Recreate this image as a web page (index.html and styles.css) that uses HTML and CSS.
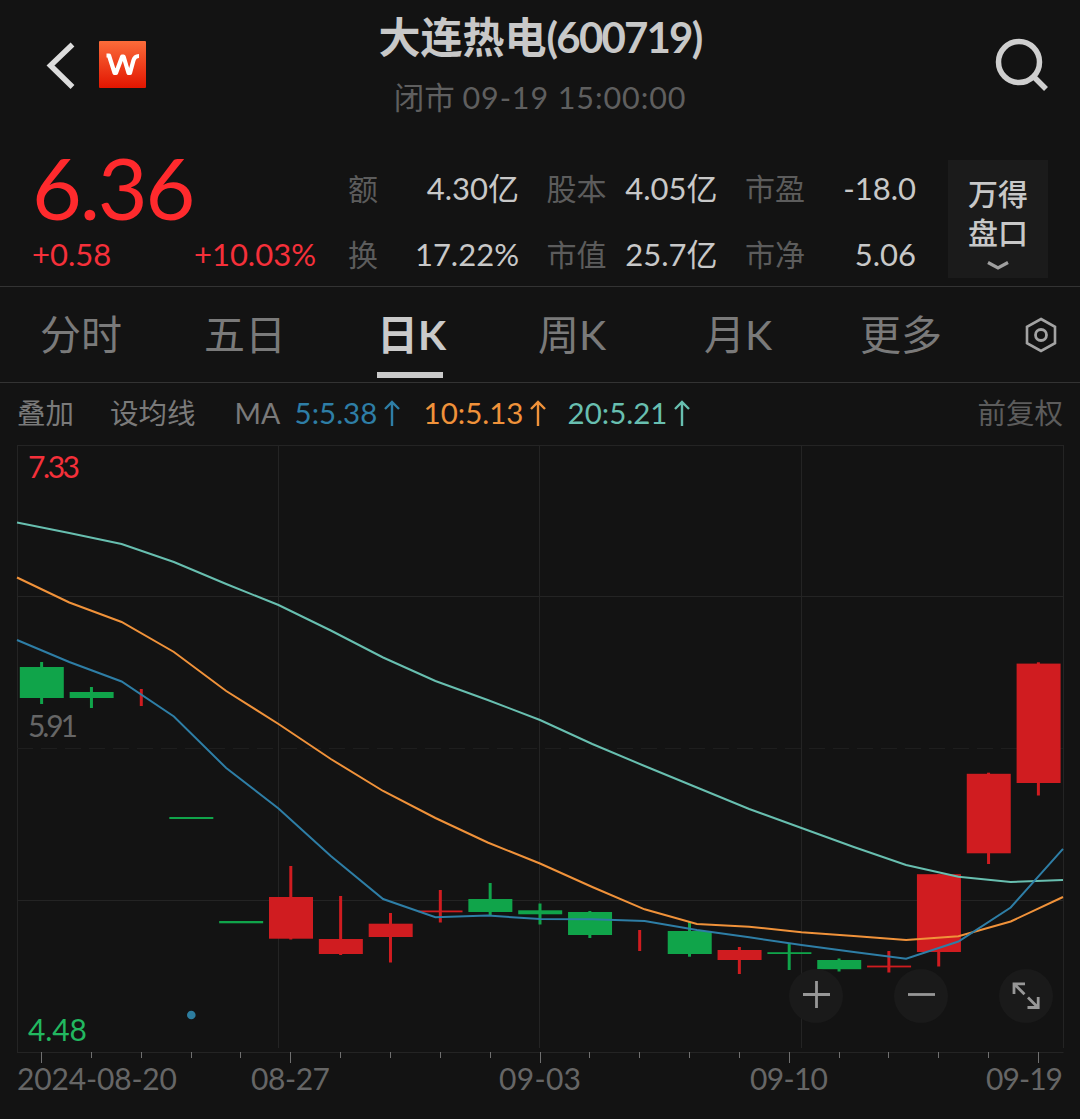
FILE: index.html
```html
<!DOCTYPE html>
<html lang="zh-CN">

<head>
    <meta charset="UTF-8">
    <meta name="viewport" content="width=device-width, initial-scale=1.0">
    <title>大连热电(600719)</title>
    <link rel="stylesheet" href="styles.css">
</head>

<body>
    <header class="header">
        <div class="header-left">
            <svg class="back" width="30" height="48" viewBox="0 0 30 48">
                <path d="M27.5 3.5L5.5 24.5L27.5 46" fill="none" stroke="#dcdcdc" stroke-width="5.5" />
            </svg>
            <svg class="logo" width="47" height="47" viewBox="0 0 47 47">
                <defs>
                    <linearGradient id="logo-bg" x1="0" y1="0" x2="0" y2="1">
                        <stop offset="0" stop-color="#fb6c3a" />
                        <stop offset="1" stop-color="#e21500" />
                    </linearGradient>
                </defs>
                <rect width="47" height="47" rx="1" fill="url(#logo-bg)" />
                <path d="M7.5 14.5H10L15.6 32H17L23.2 15.5H24.6L29.5 32H31L34.4 19.5Q35.6 15 40 15" fill="none" stroke="#fff" stroke-width="4.2" stroke-linejoin="round" />
            </svg>
        </div>
        <div class="header-title">
            <h1>大连热电<span class="code">(600719)</span></h1>
            <p class="status">闭市 <span>09-19 15:00:00</span></p>
        </div>
        <svg class="search" width="56" height="56" viewBox="0 0 56 56">
            <circle cx="27" cy="26" r="20.5" fill="none" stroke="#cfcfcf" stroke-width="5.5" />
            <path d="M41.5 40.5L54 53" stroke="#cfcfcf" stroke-width="5.5" />
        </svg>
    </header>

    <section class="quote">
        <div class="price-box">
            <div class="price">6.36</div>
            <div class="change">
                <span>+0.58</span>
                <span>+10.03%</span>
            </div>
        </div>
        <dl class="stats">
            <div><dt>额</dt><dd>4.30亿</dd></div>
            <div><dt>股本</dt><dd>4.05亿</dd></div>
            <div><dt>市盈</dt><dd>-18.0</dd></div>
            <div><dt>换</dt><dd>17.22%</dd></div>
            <div><dt>市值</dt><dd>25.7亿</dd></div>
            <div><dt>市净</dt><dd>5.06</dd></div>
        </dl>
        <button class="depth">
            <span>万得</span>
            <span>盘口</span>
            <svg width="24" height="10" viewBox="0 0 24 10">
                <path d="M2 1.5L12 7L22 1.5" fill="none" stroke="#a0a0a0" stroke-width="3.2" />
            </svg>
        </button>
    </section>

    <nav class="tabs">
        <a>分时</a>
        <a>五日</a>
        <a class="active">日K</a>
        <a>周K</a>
        <a class="month">月K</a>
        <a>更多</a>
        <svg class="settings" width="34" height="38" viewBox="0 0 34 38">
            <path d="M17 3L31 10.8V27.2L17 35L3 27.2V10.8Z" fill="none" stroke="#a3a3a3" stroke-width="2.6" />
            <circle cx="17" cy="19" r="5.5" fill="none" stroke="#a3a3a3" stroke-width="2.8" />
        </svg>
    </nav>

    <div class="indicators">
        <span class="overlay">叠加</span>
        <span class="set-ma">设均线</span>
        <span class="ma">MA</span>
        <span class="ma-value ma5">5:5.38<svg class="arrow" viewBox="0 0 16 26"><path d="M8 26V2M1 9L8 2L15 9" /></svg></span>
        <span class="ma-value ma10">10:5.13<svg class="arrow" viewBox="0 0 16 26"><path d="M8 26V2M1 9L8 2L15 9" /></svg></span>
        <span class="ma-value ma20">20:5.21<svg class="arrow" viewBox="0 0 16 26"><path d="M8 26V2M1 9L8 2L15 9" /></svg></span>
        <span class="adjust">前复权</span>
    </div>

    <div class="chart">
        <svg id="kline" width="1080" height="677" viewBox="0 442 1080 677">
            <g id="grid" class="grid">
                <path d="M17 445.5H1063.5M17 596.5H1063.5M17 900.5H1063.5M17 1052.5H1063.5" />
                <path d="M17.5 445V1052M278.5 445V1048M539.5 445V1048M801.5 445V1048M1063.5 445V1048" />
                <path class="dashed" d="M17 748.5H1063" />
            </g>
            <g id="ticks" class="ticks"></g>
            <g id="candles"></g>
            <g id="lines" class="lines"></g>
            <circle cx="191.3" cy="1015" r="4.3" fill="#2d7d9f" />
            <g class="labels">
                <text class="high" x="28" y="478" textLength="52">7.33</text>
                <text x="28" y="737" textLength="50">5.91</text>
                <text class="low" x="28" y="1041" textLength="59">4.48</text>
                <text x="17" y="1090" textLength="160">2024-08-20</text>
                <text x="251" y="1090" textLength="79">08-27</text>
                <text x="499" y="1090" textLength="82">09-03</text>
                <text x="750" y="1090" textLength="78">09-10</text>
                <text x="986" y="1090" textLength="77">09-19</text>
            </g>
        </svg>
        <div class="chart-buttons">
            <button aria-label="放大">
                <svg width="54" height="54" viewBox="0 0 54 54"><path d="M14 25.5H41M27.5 12V39" /></svg>
            </button>
            <button aria-label="缩小">
                <svg width="54" height="54" viewBox="0 0 54 54"><path d="M14 25.5H41" /></svg>
            </button>
            <button aria-label="全屏">
                <svg width="54" height="54" viewBox="0 0 54 54"><path d="M15 25V14.8H26M15 14.8L25.5 25.2M29 28.5L39 38.5M28.5 38.5H39.2V28" /></svg>
            </button>
        </div>
    </div>

    <script>
        const SVG = "http://www.w3.org/2000/svg";

        // [direction, high, open/close top, open/close bottom, low]
        const candles = [
            ["down", 662, 667, 698, 704],
            ["down", 687, 692, 698, 708],
            ["up", 689, 0, 0, 706],
            ["down", 817, 817, 819, 819],
            ["down", 921, 921, 923.3, 923.3],
            ["up", 866, 897, 938.7, 939.5],
            ["up", 896, 939, 954, 955],
            ["up", 913, 923.7, 937, 962.5],
            ["up", 890, 910.5, 912.3, 922.5],
            ["down", 883, 899, 912, 916],
            ["down", 903.5, 910.3, 914.3, 924.5],
            ["down", 911, 912, 935, 938],
            ["up", 930, 0, 0, 951],
            ["down", 922, 931, 954, 956.7],
            ["up", 947, 950, 960, 974],
            ["down", 944, 952.2, 954, 970],
            ["down", 958.5, 960, 969.2, 971.5],
            ["up", 951, 965.6, 967.4, 972.5],
            ["up", 874.2, 874.2, 952, 966.5],
            ["up", 772.7, 773.8, 853.3, 864],
            ["up", 662.3, 663.6, 783, 795.5]
        ];

        const averages = {
            ma20: [522.5, 533, 544, 562, 584, 605, 630.5, 657.5, 681, 700, 720, 744, 766, 787.5, 809, 828, 847, 865, 876.7, 882, 880],
            ma10: [577.5, 602.5, 622, 652, 691, 724, 759, 791, 818, 842.5, 863.5, 887, 909.3, 924, 926.7, 932.3, 936, 940, 936.2, 921.5, 897],
            ma5: [640, 662, 681.5, 716.5, 768, 808.5, 856, 899, 917.3, 915.6, 919, 919.3, 921, 930, 937.3, 945, 952, 958.7, 941.5, 907.5, 848.8]
        };

        function add(parent, tag, attrs) {
            let el = document.createElementNS(SVG, tag);
            for (let name in attrs) {
                el.setAttribute(name, attrs[name]);
            }
            document.getElementById(parent).appendChild(el);
        }

        candles.forEach((candle, i) => {
            let [type, high, top, bottom, low] = candle;
            let x = 41.6 + i * 49.84;
            if (low - high > 3) {
                add("candles", "rect", { class: type, x: x - 1.5, y: high, width: 3, height: low - high });
            }
            if (top) {
                add("candles", "rect", { class: type, x: x - 21.8, y: top, width: 44, height: bottom - top });
            }

            // longer tick under each dated candle
            let tickX = Math.floor(x) + 0.5;
            add("ticks", "path", { d: `M${tickX} 1052V${i % 5 === 0 ? 1063 : 1058}` });
        });

        for (let name in averages) {
            let points = averages[name].map((y, i) => `${(17 + i * 52.3).toFixed(1)},${y}`).join(" ");
            add("lines", "polyline", { class: name, points: points });
        }
    </script>
</body>

</html>
```

FILE: styles.css
```css
* {
    margin: 0;
    padding: 0;
    box-sizing: border-box;
}

body {
    width: 1080px;
    height: 1119px;
    overflow: hidden;
    background: #131313;
    color: #c8c8c8;
    font-family: Lato, "Noto Sans CJK SC", sans-serif;
}

button {
    border: none;
    font-family: inherit;
    color: inherit;
}

svg {
    display: block;
    flex-shrink: 0;
}

/* header */
.header {
    display: grid;
    grid-template-columns: 1fr auto 1fr;
    height: 140px;
}

.header-left {
    display: flex;
    align-items: flex-start;
    padding: 41px 0 0 45px;
}

.logo {
    margin-left: 24px;
}

.header-title {
    text-align: center;
    padding-top: 7px;
}

.header-title h1 {
    font-size: 42px;
    line-height: 60px;
    font-weight: 700;
    white-space: nowrap;
}

.code {
    letter-spacing: -1.8px;
}

.status {
    font-size: 30.5px;
    line-height: 40px;
    margin-top: 10px;
    color: #5f5f5f;
    white-space: nowrap;
}

.status span {
    letter-spacing: 0.9px;
}

.search {
    justify-self: end;
    margin: 36px 32px 0 0;
}

/* quote */
.quote {
    display: flex;
    height: 147px;
    border-bottom: 1px solid #333;
}

.price-box {
    width: 316px;
    padding-left: 32px;
}

.price {
    height: 94px;
    font-family: Lato, sans-serif;
    font-size: 86px;
    line-height: 94px;
    letter-spacing: -2.2px;
    color: #ff2a2d;
}

.change {
    display: flex;
    justify-content: space-between;
    font-size: 31px;
    line-height: 40px;
    color: #f5303a;
}

.stats {
    display: grid;
    grid-template-columns: repeat(3, 171px);
    grid-auto-rows: 66px;
    column-gap: 27.5px;
    margin: 15px 0 0 32px;
    font-size: 30px;
    line-height: 40px;
}

.stats div {
    display: flex;
    justify-content: space-between;
    align-items: center;
}

.stats dt {
    color: #5c5c5c;
}

.stats dd {
    font-size: 31px;
}

.depth {
    display: flex;
    flex-direction: column;
    align-items: center;
    width: 100px;
    height: 118px;
    margin: 20px 0 0 32px;
    padding-top: 14px;
    background: #1b1b1b;
    font-size: 30px;
    font-weight: 500;
    line-height: 39px;
}

.depth svg {
    margin-top: 9px;
}

/* period tabs */
.tabs {
    display: flex;
    align-items: center;
    height: 96px;
    padding-left: 40px;
    border-bottom: 1px solid #333;
    font-size: 41px;
    color: #7a7a7a;
}

.tabs a {
    position: relative;
    width: 82px;
    margin-right: 82px;
    line-height: 60px;
    white-space: nowrap;
}

.tabs .active {
    color: #cacaca;
    font-weight: 700;
    margin-left: 9px;
}

.tabs .active ~ a {
    margin-left: -3px;
}

.tabs .active ~ .month {
    margin-left: 2px;
    margin-right: 77px;
}

.tabs .active::after {
    content: "";
    position: absolute;
    left: 0;
    bottom: -13px;
    width: 66px;
    height: 6px;
    background: #cacaca;
}

/* moving averages */
.indicators {
    display: flex;
    align-items: center;
    height: 59px;
    padding: 0 17px;
    font-size: 28.5px;
    line-height: 40px;
    color: #7a7a7a;
    white-space: nowrap;
}

.overlay {
    margin-right: 36px;
}

.set-ma {
    margin-right: 39px;
}

.ma {
    width: 43px;
    margin-right: 17px;
}

.ma-value {
    display: flex;
    align-items: center;
    justify-content: space-between;
    width: 105px;
    margin-right: 24px;
    font-size: 29.5px;
}

.ma-value.ma10,
.ma-value.ma20 {
    width: 122px;
    margin-right: 22px;
}

.arrow {
    width: 16px;
    height: 26px;
    fill: none;
    stroke: currentColor;
    stroke-width: 2.4;
}

.adjust {
    margin-left: auto;
    color: #5c5c5c;
}

.ma5 {
    color: #2e7ea6;
    stroke: #2e7ea6;
}

.ma10 {
    color: #f0923a;
    stroke: #f0923a;
}

.ma20 {
    color: #68bfb0;
    stroke: #68bfb0;
}

/* chart */
.chart {
    position: relative;
}

.grid path {
    fill: none;
    stroke: #242424;
}

.grid .dashed {
    stroke: #1e1e1e;
    stroke-dasharray: 16 8;
}

.ticks path {
    stroke: #707070;
    stroke-width: 1;
}

.up {
    fill: #d01c20;
}

.down {
    fill: #10a44a;
}

.lines polyline {
    fill: none;
    stroke-width: 2;
}

.labels text {
    fill: #666;
    font-size: 30px;
}

.labels .high {
    fill: #f5303a;
}

.labels .low {
    fill: #22b860;
}

.chart-buttons {
    position: absolute;
    top: 527px;
    right: 27px;
    display: flex;
    gap: 51px;
}

.chart-buttons button {
    width: 54px;
    height: 54px;
    border-radius: 50%;
    background: #1a1a1a;
}

.chart-buttons path {
    fill: none;
    stroke: #979797;
    stroke-width: 2.8;
}
```
